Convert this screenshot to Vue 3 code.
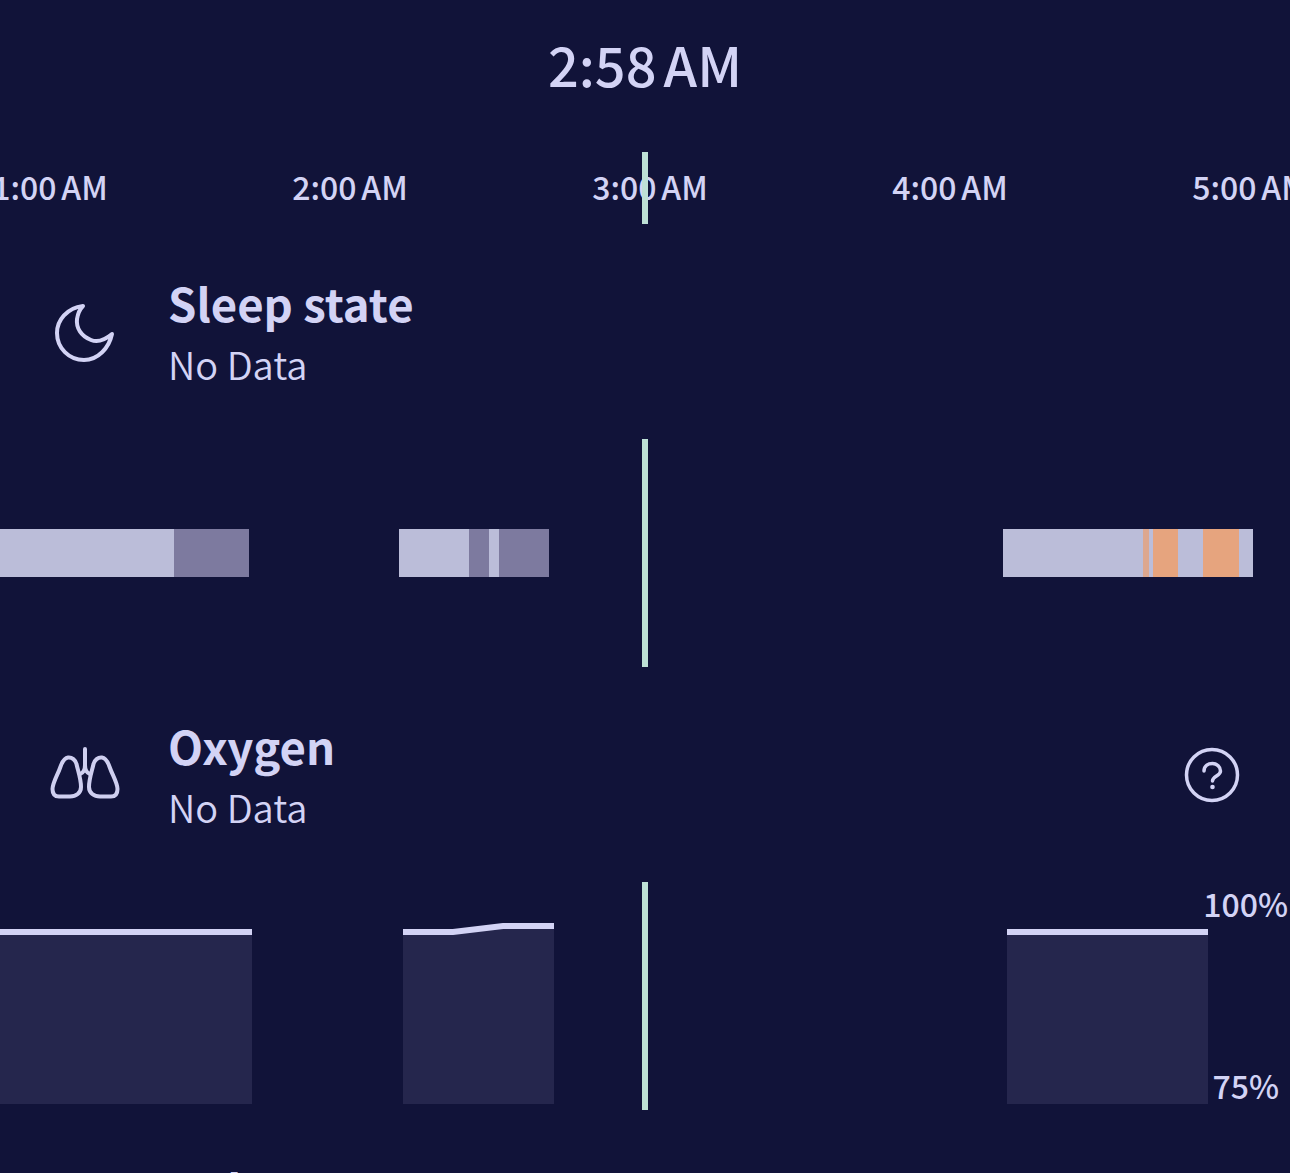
<template>
  <div class="page">
    <div class="clock">2:58 AM</div>

    <div class="ruler">
      <div class="hours">
        <span v-for="h in hours" :key="h" class="hour">{{ h }}</span>
      </div>
      <div class="now"></div>
    </div>

    <section class="metric">
      <div class="metric-head">
        <svg class="metric-icon" width="70" height="70" viewBox="0 0 70 70" fill="none">
          <path d="M33 8 C17 10 7 22 7 35 C7 50 19 62 34 62 C48 62 59 50 62 36 C56 41 48 45 41 42 C31 38 26 30 27 21 C28 15 30 11 33 8 Z" stroke="#d3d3f5" stroke-width="4" stroke-linejoin="round" />
        </svg>
        <div>
          <h2>Sleep state</h2>
          <p>No Data</p>
        </div>
      </div>
      <div class="track">
        <div
          v-for="s in sleep"
          :key="s.x"
          class="seg"
          :class="s.kind"
          :style="{ left: s.x + 'px', width: s.w + 'px' }"
        ></div>
        <div class="now"></div>
      </div>
    </section>

    <section class="metric">
      <div class="metric-head">
        <svg class="metric-icon" width="70" height="70" viewBox="0 0 70 70" fill="none" stroke="#cfcff0" stroke-width="4" stroke-linecap="round" stroke-linejoin="round">
          <path d="M35 8 V27 M35 24 C35 29 33 32 30 33 M35 24 C35 29 37 32 40 33" />
          <path d="M18 16.5 C14 17 12 21 10 27 C8 33 2.5 42 2.5 48 C2.5 53 5 55.5 9 55.5 L20 55.5 C26 55.5 31 52 31 46 C31 38 28 30 26.5 23 C25.5 19 22 16 18 16.5 Z" />
          <path d="M52 16.5 C56 17 58 21 60 27 C62 33 67.5 42 67.5 48 C67.5 53 65 55.5 61 55.5 L50 55.5 C44 55.5 39 52 39 46 C39 38 42 30 43.5 23 C44.5 19 48 16 52 16.5 Z" />
        </svg>
        <div>
          <h2>Oxygen</h2>
          <p>No Data</p>
        </div>
        <svg class="help" width="56" height="56" viewBox="0 0 56 56" fill="none">
          <circle cx="28" cy="28" r="25.5" stroke="#d3d3f5" stroke-width="3.5" />
          <path d="M20 24 C20 19 24 16.5 28.5 16.5 C33 16.5 36.5 20 36.5 24 C36.5 29 28.5 29 28.5 34" stroke="#d3d3f5" stroke-width="3.5" stroke-linecap="round" />
          <circle cx="28.5" cy="40" r="2.3" fill="#d3d3f5" />
        </svg>
      </div>
      <div class="track">
        <svg class="spark" width="1290" height="228" viewBox="0 0 1290 228">
          <g v-for="a in oxygen" :key="a.line">
            <polygon :points="a.area" fill="#25264d" />
            <polyline :points="a.line" fill="none" stroke="#d3d3f5" stroke-width="6" />
          </g>
        </svg>
        <span class="scale scale-top">100%</span>
        <span class="scale scale-bottom">75%</span>
        <div class="now"></div>
      </div>
    </section>

    <section class="metric">
      <div class="metric-head">
        <div class="metric-icon blank"></div>
        <div>
          <h2>Pulse</h2>
          <p>No Data</p>
        </div>
      </div>
    </section>
  </div>
</template>

<script setup>
const hours = ['1:00 AM', '2:00 AM', '3:00 AM', '4:00 AM', '5:00 AM']

const sleep = [
  { x: -10, w: 184, kind: 'light' },
  { x: 174, w: 75, kind: 'deep' },
  { x: 399, w: 70, kind: 'light' },
  { x: 469, w: 20, kind: 'deep' },
  { x: 489, w: 10, kind: 'light' },
  { x: 499, w: 50, kind: 'deep' },
  { x: 1003, w: 250, kind: 'light' },
  { x: 1143, w: 6, kind: 'faint' },
  { x: 1153, w: 25, kind: 'awake' },
  { x: 1203, w: 36, kind: 'awake' }
]

const oxygen = [
  { area: '0,50 252,50 252,222 0,222', line: '0,50 252,50' },
  { area: '403,50 453,50 503,44 554,44 554,222 403,222', line: '403,50 453,50 503,44 554,44' },
  { area: '1007,50 1208,50 1208,222 1007,222', line: '1007,50 1208,50' }
]
</script>

<style>
html,
body {
  background: #111339;
}
</style>

<style scoped>
.page {
  width: 1290px;
  height: 1173px;
  overflow: hidden;
  background: #111339;
  color: #d3d3f5;
  font-family: "Noto Sans CJK JP", "Noto Sans", sans-serif;
}

.clock {
  padding-top: 29px;
  height: 152px;
  box-sizing: border-box;
  text-align: center;
  font-size: 54px;
  line-height: 70px;
  font-weight: 500;
  word-spacing: -5px;
}

.ruler {
  position: relative;
  height: 72px;
}

.hours {
  display: flex;
  margin-left: -100px;
}

.hour {
  flex: 0 0 300px;
  text-align: center;
  font-size: 32px;
  line-height: 68px;
  font-weight: 500;
  word-spacing: -2.5px;
  white-space: nowrap;
}

.metric-head {
  display: flex;
  align-items: center;
  padding: 48px 50px 45px;
  gap: 48px;
}

.metric-icon {
  flex: none;
  margin-top: -1px;
}

.blank {
  width: 70px;
  height: 70px;
}

.metric h2 {
  margin: 0;
  font-size: 45.5px;
  line-height: 61px;
  font-weight: 700;
}

.metric p {
  margin: 0;
  font-size: 38px;
  line-height: 61px;
  font-weight: 350;
}

.help {
  margin-left: auto;
  margin-top: -3px;
}

.track {
  position: relative;
  height: 228px;
}

.now {
  position: absolute;
  left: 642px;
  top: 0;
  bottom: 0;
  width: 6px;
  background: #bde0d6;
}

.seg {
  position: absolute;
  top: 90px;
  height: 48px;
}

.light { background: #bbbdd9; }
.deep { background: #7d7a9f; }
.awake { background: #e6a47e; }
.faint { background: #dca78f; }

.spark {
  position: absolute;
  left: 0;
  top: 0;
}

.scale {
  position: absolute;
  font-size: 32px;
  line-height: 40px;
  font-weight: 500;
}

.scale-top {
  right: 2px;
  top: 1px;
}

.scale-bottom {
  right: 11px;
  top: 183px;
}
</style>
